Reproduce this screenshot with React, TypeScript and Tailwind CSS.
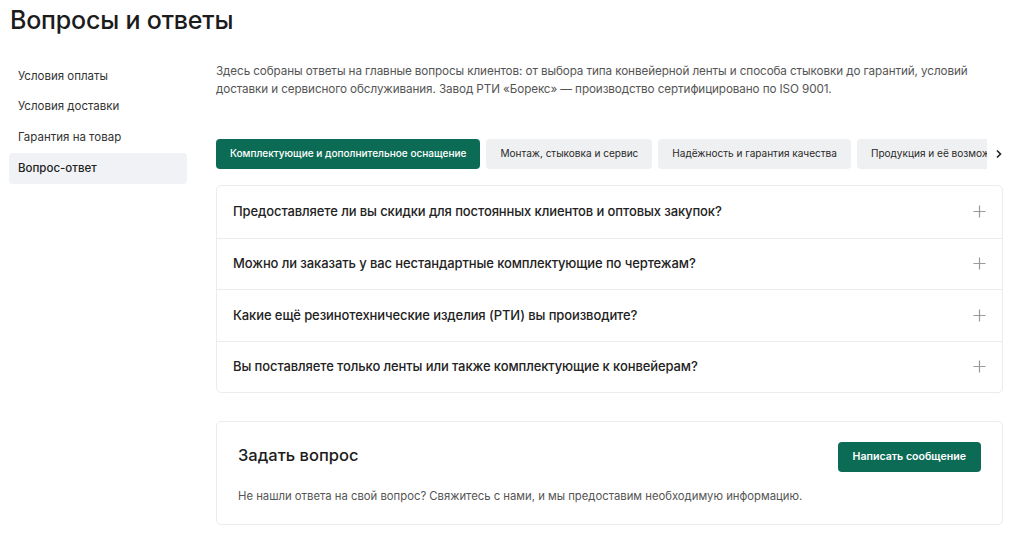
import React from 'react';

const menu = ['Условия оплаты', 'Условия доставки', 'Гарантия на товар', 'Вопрос-ответ'];

const tabs = [
  'Комплектующие и дополнительное оснащение',
  'Монтаж, стыковка и сервис',
  'Надёжность и гарантия качества',
  'Продукция и её возможности',
];

const questions = [
  'Предоставляете ли вы скидки для постоянных клиентов и оптовых закупок?',
  'Можно ли заказать у вас нестандартные комплектующие по чертежам?',
  'Какие ещё резинотехнические изделия (РТИ) вы производите?',
  'Вы поставляете только ленты или также комплектующие к конвейерам?',
];

const PlusIcon = () => (
  <svg width="13" height="13" viewBox="0 0 13 13" fill="none" stroke="#9a9a9a" strokeWidth="1.2">
    <path d="M6.5 0.5v12M0.5 6.5h12" />
  </svg>
);

export default function App() {
  return (
    <div className="w-[1024px] h-[535px] overflow-hidden bg-white text-[#1e1e1e]" style={{ fontFamily: 'Inter, "Noto Sans", sans-serif' }}>
      <h1 className="pl-[10px] pt-[3px] text-[25px] leading-[34px] font-medium tracking-[-0.2px] text-[#1c1c1c]">Вопросы и ответы</h1>
      <div className="flex gap-[29px] pl-[9px] pt-[25px]">
        <nav className="w-[178px] flex flex-col -mt-[1px]">
          {menu.map((m, i) => (
            <div
              key={m}
              className={`h-[30.7px] px-[9px] flex items-center text-[11.5px] rounded-[4px] ${i === 3 ? 'bg-[#f1f2f5] font-medium text-[#222]' : 'text-[#333]'}`}
            >
              {m}
            </div>
          ))}
        </nav>
        <main className="w-[787px]">
          <p className="text-[11.7px] leading-[18px] text-[#555] tracking-[-0.1px]">
            Здесь собраны ответы на главные вопросы клиентов: от выбора типа конвейерной ленты и способа стыковки до гарантий, условий
            доставки и сервисного обслуживания. Завод РТИ «Борекс» — производство сертифицировано по ISO 9001.
          </p>
          <div className="flex items-center mt-[41px]">
            <div className="flex gap-[6px] w-[772px] overflow-hidden">
              {tabs.map((t, i) => (
                <div
                  key={t}
                  className={`shrink-0 h-[30px] px-[14px] flex items-center rounded-[4px] text-[10.05px] whitespace-nowrap ${i === 0 ? 'bg-[#0c6b55] text-white font-medium' : 'bg-[#eff0f2] text-[#2a2a2a]'}`}
                >
                  {t}
                </div>
              ))}
            </div>
            <svg className="ml-[8px]" width="8" height="10" viewBox="0 0 8 10" fill="none" stroke="#222" strokeWidth="1.6">
              <path d="M2 1.5l3.5 3.5L2 8.5" />
            </svg>
          </div>
          <div className="mt-[16px] border border-[#ececec] rounded-[5px]">
            {questions.map((q, i) => (
              <div
                key={q}
                className={`h-[51.5px] px-[16px] flex items-center justify-between ${i > 0 ? 'border-t border-[#ececec]' : ''}`}
              >
                <span className="text-[13px] font-medium text-[#222] tracking-[-0.1px]">{q}</span>
                <PlusIcon />
              </div>
            ))}
          </div>
          <div className="mt-[28px] border border-[#ececec] rounded-[5px] pl-[21px] pr-[21px] pt-[20px] h-[104px]">
            <div className="flex items-center justify-between">
              <h2 className="text-[16.5px] font-medium text-[#1c1c1c] -mt-[4px]">Задать вопрос</h2>
              <button className="h-[30px] px-[15px] rounded-[4px] bg-[#0c6b55] text-white text-[10.6px] font-semibold">Написать сообщение</button>
            </div>
            <p className="mt-[16px] text-[11.3px] text-[#555]">
              Не нашли ответа на свой вопрос? Свяжитесь с нами, и мы предоставим необходимую информацию.
            </p>
          </div>
        </main>
      </div>
    </div>
  );
}
